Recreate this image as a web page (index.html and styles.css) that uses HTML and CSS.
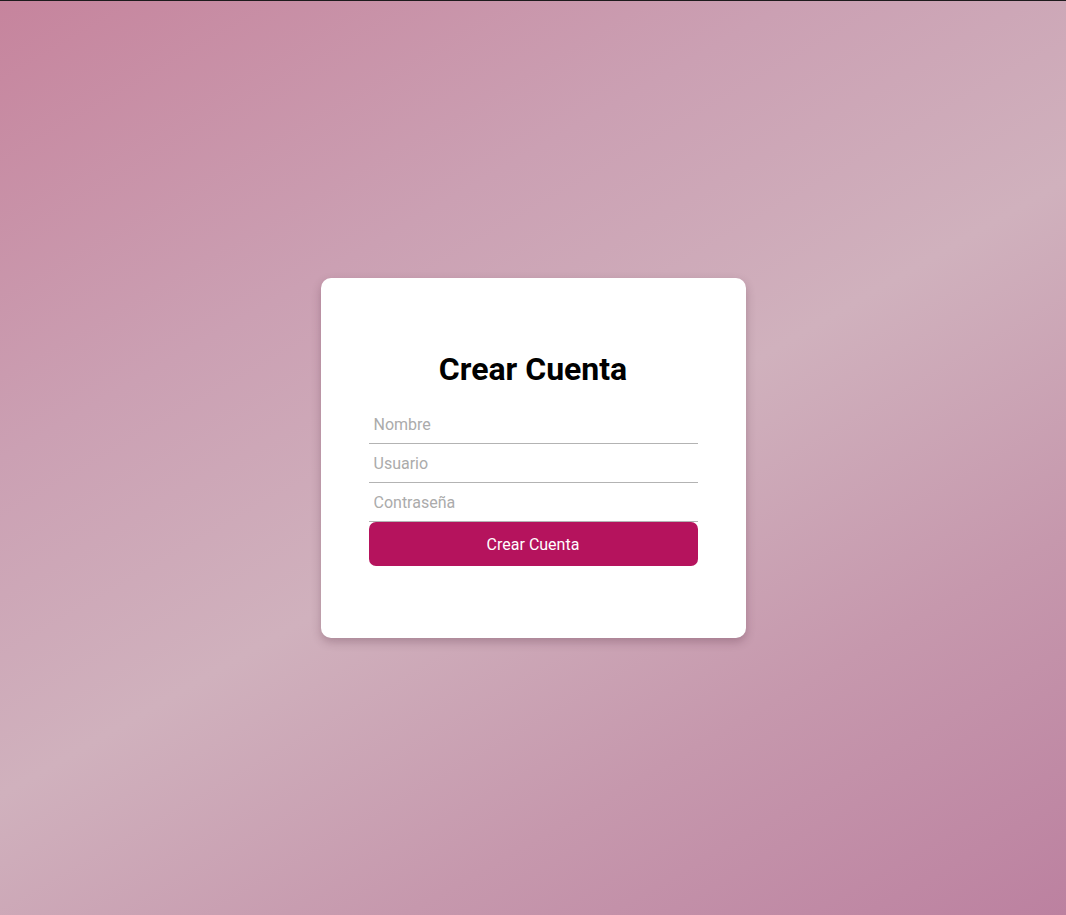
FILE: index.html
```html
<!DOCTYPE html>
<html lang="es">
<head>
<meta charset="utf-8">
<title>Crear Cuenta</title>
<link rel="stylesheet" href="styles.css">
</head>
<body>
  <main class="page">
    <form class="card">
      <h1 class="title">Crear Cuenta</h1>
      <input class="field" type="text" placeholder="Nombre">
      <input class="field" type="text" placeholder="Usuario">
      <input class="field" type="password" placeholder="Contraseña">
      <button class="btn" type="button">Crear Cuenta</button>
    </form>
  </main>
</body>
</html>
```
FILE: styles.css
```css
* { box-sizing: border-box; }
html, body { margin: 0; padding: 0; }
body {
  font-family: Roboto, "Liberation Sans", sans-serif;
  border-top: 1px solid #1e1b1d;
  background: linear-gradient(150deg, #c6849d 0%, #cba0b3 30%, #d0b1bd 52%, #c698ad 75%, #bc81a0 100%);
  min-height: 100vh;
}
.page {
  min-height: calc(100vh - 1px);
  display: flex;
  align-items: center;
  justify-content: center;
}
.card {
  width: 425px;
  height: 360px;
  background: #fff;
  border-radius: 10px;
  box-shadow: 0 4px 10px rgba(60, 20, 40, 0.25);
  padding: 48px 48px 0;
  display: flex;
  flex-direction: column;
}
.title {
  margin: 24px 0 17px;
  font-size: 32px;
  font-weight: 700;
  text-align: center;
  color: #000;
  line-height: 38px;
}
.field {
  display: block;
  flex: none;
  width: 100%;
  height: 39px;
  border: none;
  border-bottom: 1px solid #b3b3b3;
  padding: 1px 5px 0;
  font-family: inherit;
  font-size: 16px;
  color: #333;
  outline: none;
  background: transparent;
}
.field::placeholder { color: #ababab; }
.btn {
  flex: none;
  height: 44px;
  width: 100%;
  border: none;
  border-radius: 7px;
  background: #b5135d;
  color: #fff;
  font-family: inherit;
  font-size: 16px;
  cursor: pointer;
}
```
